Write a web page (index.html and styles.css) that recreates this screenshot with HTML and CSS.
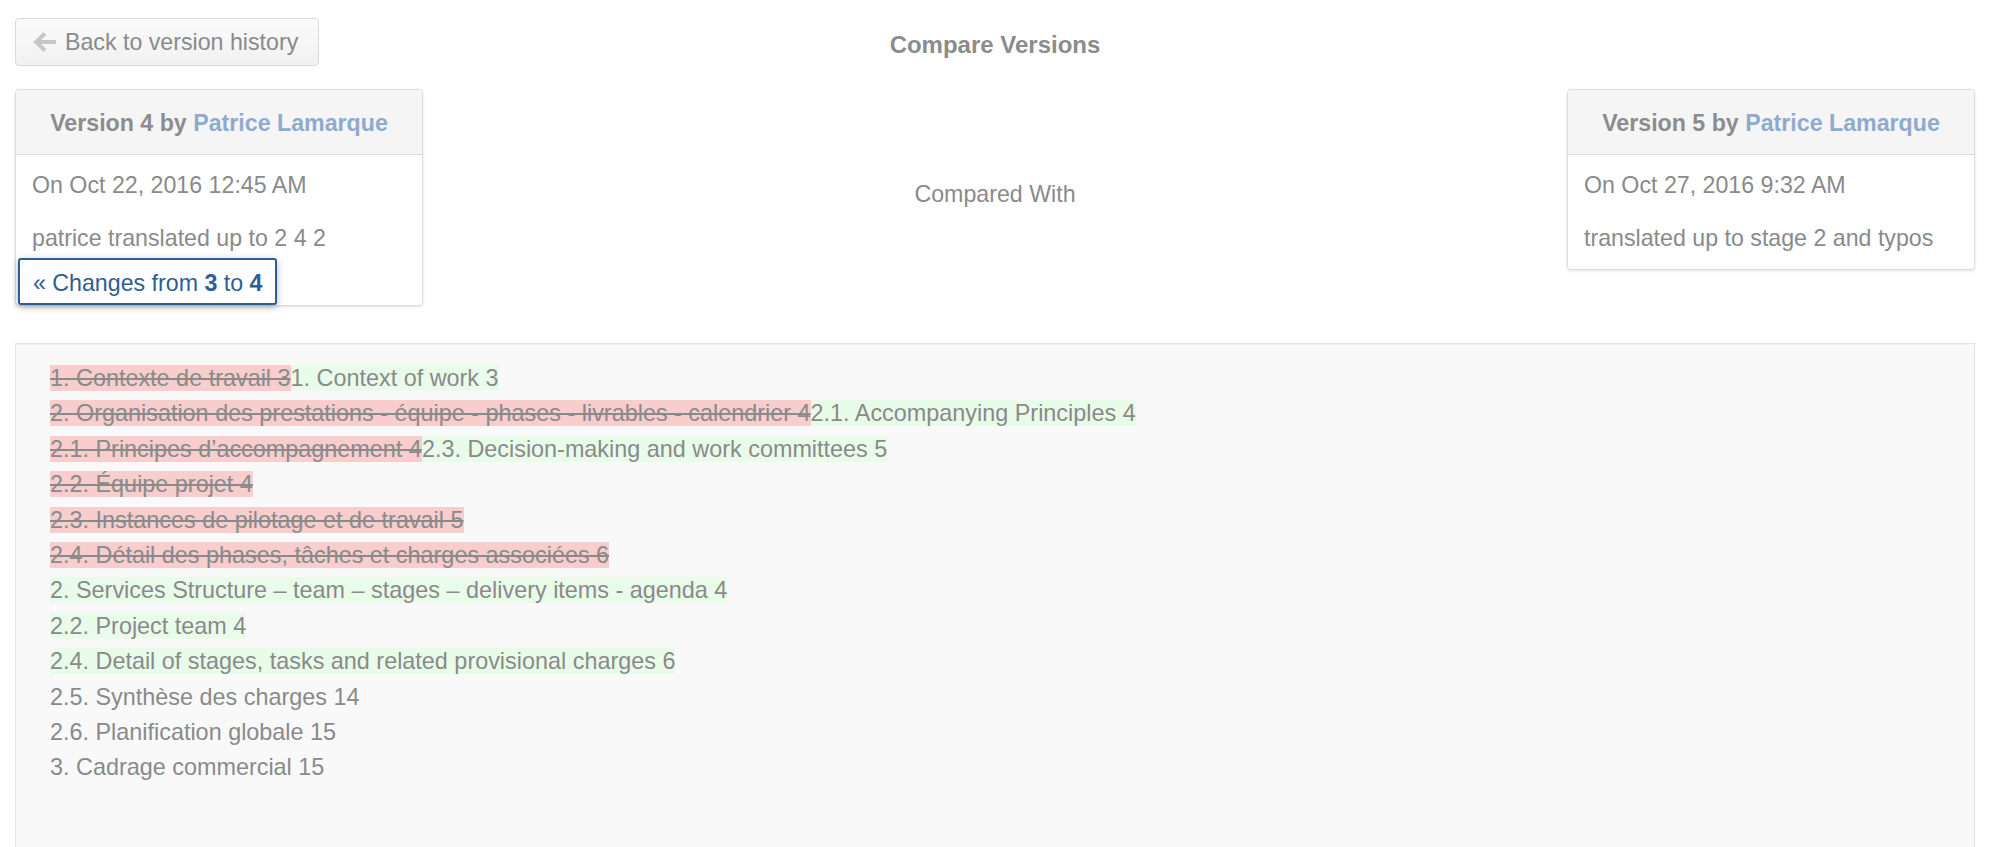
FILE: index.html
```html
<!DOCTYPE html>
<html lang="en">
<head>
<meta charset="utf-8">
<title>Compare Versions</title>
<link rel="stylesheet" href="styles.css">
</head>
<body>
<div class="page">
  <div class="topbar">
    <div class="topbar-left">
      <a class="back-btn" href="#">
        <svg class="back-arrow" width="24" height="20" viewBox="0 0 24 20" aria-hidden="true">
          <path d="M23 10H4M12 1.5L3 10l9 8.5" fill="none" stroke="#c6c6c6" stroke-width="3.8" stroke-linecap="butt" stroke-linejoin="miter"/>
        </svg>
        <span>Back to version history</span>
      </a>
    </div>
    <h1 class="title">Compare Versions</h1>
    <div></div>
  </div>

  <div class="cards">
    <div class="card">
      <div class="card-head">Version 4 by <a class="author" href="#">Patrice Lamarque</a></div>
      <div class="card-body card-body-link">
        <p>On Oct 22, 2016 12:45 AM</p>
        <p class="tight">patrice translated up to 2 4 2</p>
        <a class="changes-link" href="#">« Changes from <b>3</b> to <b>4</b></a>
      </div>
    </div>
    <div class="compared">Compared With</div>
    <div class="card">
      <div class="card-head">Version 5 by <a class="author" href="#">Patrice Lamarque</a></div>
      <div class="card-body">
        <p>On Oct 27, 2016 9:32 AM</p>
        <p>translated up to stage 2 and typos</p>
      </div>
    </div>
  </div>

  <div class="diff">
    <div class="line"><span class="del">1. Contexte de travail 3</span><span class="ins">1. Context of work 3</span></div>
    <div class="line"><span class="del">2. Organisation des prestations - équipe - phases - livrables - calendrier 4</span><span class="ins">2.1. Accompanying Principles 4</span></div>
    <div class="line"><span class="del">2.1. Principes d’accompagnement 4</span><span class="ins">2.3. Decision-making and work committees 5</span></div>
    <div class="line"><span class="del">2.2. Équipe projet 4</span></div>
    <div class="line"><span class="del">2.3. Instances de pilotage et de travail 5</span></div>
    <div class="line"><span class="del">2.4. Détail des phases, tâches et charges associées 6</span></div>
    <div class="line"><span class="ins">2. Services Structure – team – stages – delivery items - agenda 4</span></div>
    <div class="line"><span class="ins">2.2. Project team 4</span></div>
    <div class="line"><span class="ins">2.4. Detail of stages, tasks and related provisional charges 6</span></div>
    <div class="line">2.5. Synthèse des charges 14</div>
    <div class="line">2.6. Planification globale 15</div>
    <div class="line">3. Cadrage commercial 15</div>
  </div>
</div>
</body>
</html>
```

FILE: styles.css
```css
html, body {
  margin: 0;
  padding: 0;
  background: #ffffff;
}

body {
  font-family: "Liberation Sans", Arial, Helvetica, sans-serif;
  font-size: 23.2px;
  color: #8a8a8a;
}

a {
  text-decoration: none;
}

.page {
  padding: 18px 24px 0 15px;
}

/* top bar */
.topbar {
  display: grid;
  grid-template-columns: 1fr auto 1fr;
  align-items: start;
}

.back-btn {
  display: inline-flex;
  align-items: center;
  box-sizing: border-box;
  height: 48px;
  padding: 0 20px 0 17px;
  gap: 8px;
  border: 1px solid #d9d9d9;
  border-radius: 4px;
  background: linear-gradient(#fbfbfb, #f1f1f1);
  color: #8a8a8a;
  line-height: 46px;
}

.back-arrow {
  display: block;
  flex: none;
}

.title {
  margin: 0;
  padding-top: 3px;
  font-size: 24px;
  line-height: 48px;
  font-weight: bold;
  color: #8c8c8c;
  text-align: center;
}

/* version cards */
.cards {
  display: grid;
  grid-template-columns: 408px 1fr 408px;
  align-items: start;
  margin-top: 20px;
}

.card {
  border: 1px solid #dedede;
  border-radius: 4px;
  background: #ffffff;
  box-shadow: 0 1px 3px rgba(0, 0, 0, 0.12);
}

.card-head {
  padding: 17px 15px 14px;
  line-height: 33px;
  text-align: center;
  font-weight: bold;
  color: #8c8c8c;
  background: #f5f5f5;
  border-bottom: 1px solid #dedede;
  border-radius: 4px 4px 0 0;
}

.author {
  color: #8eabcf;
}

.card-body {
  padding: 14px 15px 14px 16px;
  line-height: 33px;
}

.card-body p {
  margin: 0 0 20px;
}

.card-body p:last-child {
  margin-bottom: 0;
}

.card-body-link {
  padding-bottom: 0;
}

.card-body p.tight {
  margin-bottom: 3px;
}

.changes-link {
  display: inline-block;
  margin-left: -14px;
  padding: 3px 13px 0;
  line-height: 40px;
  border: 2px solid #2e5e93;
  border-radius: 3px;
  background: #ffffff;
  color: #2e5e93;
  box-shadow: 0 2px 7px rgba(0, 0, 0, 0.3);
}

.changes-link b {
  font-weight: bold;
}

.compared {
  padding-top: 89px;
  line-height: 33px;
  text-align: center;
  color: #8a8a8a;
}

/* diff */
.diff {
  margin-top: 37px;
  min-height: 520px;
  padding: 17px 33px 17px 34px;
  border: 1px solid #e3e3e3;
  background: #f9f9f9;
  box-shadow: inset 0 1px 1px rgba(0, 0, 0, 0.03);
  font-size: 23.4px;
  line-height: 35.4px;
  color: #8a8a8a;
}

.del {
  background: #f7cdcd;
  text-decoration: line-through;
}

.ins {
  background: #e9fbe9;
}
```
